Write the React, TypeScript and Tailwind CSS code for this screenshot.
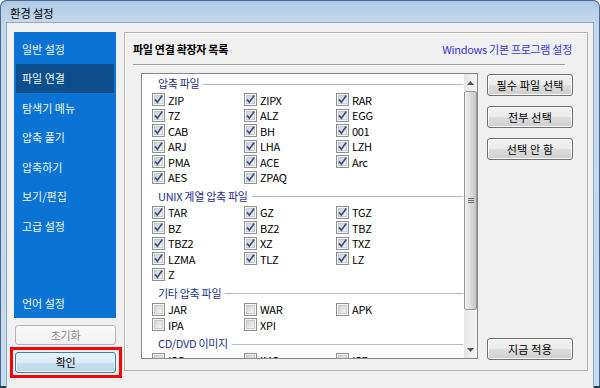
import React from "react";

type Item = [string, boolean];
const groups: { title: string; items: Item[] }[] = [
  {
    title: "압축 파일",
    items: [
      ["ZIP", true], ["ZIPX", true], ["RAR", true],
      ["7Z", true], ["ALZ", true], ["EGG", true],
      ["CAB", true], ["BH", true], ["001", true],
      ["ARJ", true], ["LHA", true], ["LZH", true],
      ["PMA", true], ["ACE", true], ["Arc", true],
      ["AES", true], ["ZPAQ", true],
    ],
  },
  {
    title: "UNIX 계열 압축 파일",
    items: [
      ["TAR", true], ["GZ", true], ["TGZ", true],
      ["BZ", true], ["BZ2", true], ["TBZ", true],
      ["TBZ2", true], ["XZ", true], ["TXZ", true],
      ["LZMA", true], ["TLZ", true], ["LZ", true],
      ["Z", true],
    ],
  },
  {
    title: "기타 압축 파일",
    items: [["JAR", false], ["WAR", false], ["APK", false], ["IPA", false], ["XPI", false]],
  },
  {
    title: "CD/DVD 이미지",
    items: [["ISO", false], ["IMG", false], ["ISZ", false]],
  },
];

const menu = ["일반 설정", "파일 연결", "탐색기 메뉴", "압축 풀기", "압축하기", "보기/편집", "고급 설정"];

function CheckBox({ checked }: { checked: boolean }) {
  return (
    <svg width="13" height="13" viewBox="0 0 13 13" className="shrink-0">
      <defs>
        <linearGradient id="cbfill" x1="0" y1="0" x2="1" y2="1">
          <stop offset="0" stopColor="#cdd1d6" />
          <stop offset="1" stopColor="#f6f6f6" />
        </linearGradient>
      </defs>
      <rect x="0.5" y="0.5" width="12" height="12" fill="#f6f6f6" stroke="#8e8f8f" />
      <rect x="2.5" y="2.5" width="8" height="8" fill="url(#cbfill)" stroke="#c8cacd" />
      {checked && (
        <path d="M3 6.4 L5.4 9.2 L10.2 2.6" fill="none" stroke="#3a4e88" strokeWidth="1.7" />
      )}
    </svg>
  );
}

function WinButton({ children }: { children: React.ReactNode }) {
  return (
    <div className="h-[22px] w-[86px] flex items-center justify-center rounded-[3px] border border-[#707070] bg-[linear-gradient(#f2f2f2,#ebebeb_50%,#dddddd_50%,#cfcfcf)] shadow-[inset_0_0_0_1px_#fbfbfb] text-black tracking-[0.2px]">
      {children}
    </div>
  );
}

function Arrow({ up }: { up: boolean }) {
  return (
    <svg width="7" height="4" viewBox="0 0 7 4">
      {up ? <path d="M0 4 L3.5 0 L7 4 Z" fill="#505050" /> : <path d="M0 0 L3.5 4 L7 0 Z" fill="#505050" />}
    </svg>
  );
}

export default function App() {
  return (
    <div className="w-[600px] h-[388px] overflow-hidden flex flex-col px-[6px] pb-[6px] rounded-t-[7px] font-['Noto_Sans_CJK_KR',sans-serif] text-[11px] tracking-[-0.3px] text-black bg-[linear-gradient(180deg,#adc8e6_0px,#c4d8ee_22px,#c8dbef_100%)] shadow-[inset_0_-2px_0_#1f3f4c,inset_0_0_0_1px_#4a6a8c]">
      {/* title bar */}
      <div className="h-[22px] shrink-0 flex items-center pl-[4px] pt-[6px] text-[11.5px]">환경 설정</div>

      {/* client */}
      <div className="flex-1 flex border border-[#8fa8c6] bg-[#f0f0f0] pt-[9px] pl-[3px] pr-[5px] pb-[10px]">
        {/* left column */}
        <div className="w-[112px] shrink-0 flex flex-col">
          <div className="ml-[4px] w-[102px] h-[286px] bg-[#0b73d3] flex flex-col pt-[2px]">
            {menu.map((m) => (
              <div
                key={m}
                className={
                  "h-[29.5px] mx-[2px] pl-[6px] flex items-center text-[#f2f7fc] tracking-[0px] " +
                  (m === "파일 연결" ? "bg-[#0c4e8e]" : "")
                }
              >
                {m}
              </div>
            ))}
            <div className="flex-1" />
            <div className="h-[29px] mx-[2px] pl-[6px] flex items-center text-[#f2f7fc] tracking-[0px]">언어 설정</div>
          </div>
          <div className="mt-[7px] ml-[5px] w-[101px] h-[20px] rounded-[3px] border border-[#b1b5b8] bg-[linear-gradient(#fafafa,#f1f1f1)] flex items-center justify-center text-[#8a8a8a]">
            초기화
          </div>
          <div className="mt-[2px] w-[112px] h-[31px] border-[3px] border-[#ff0000] pt-[2px] pl-[2px]">
            <div className="w-[101px] h-[21px] rounded-[3px] border border-[#3c7fb1] bg-[linear-gradient(#e8f3fa,#dcecf6_50%,#c6e0ef_50%,#b9d8ea)] shadow-[inset_0_0_0_1px_#e9f7fd] flex items-center justify-center">
              확인
            </div>
          </div>
        </div>

        {/* right panel */}
        <div className="ml-[2px] w-[464px] h-[339px] border border-[#b2b2b2] shadow-[inset_1px_1px_0_#ffffff] flex flex-col">
          <div className="mt-[8px] h-[17px] pl-[8px] pr-[15px] flex items-center justify-between">
            <span className="font-bold">파일 연결 확장자 목록</span>
            <span className="text-[#3535df]">Windows 기본 프로그램 설정</span>
          </div>
          <div className="mt-[6px] ml-[8px] mr-[22px] h-[2px] border-t border-[#a0a0a0] border-b border-b-white" />

          <div className="mt-[7px] pl-[16px] flex gap-[9px]">
            {/* list box */}
            <div className="w-[337px] h-[286px] border border-[#828790] bg-white flex overflow-hidden">
              <div className="flex-1 pt-[1px] overflow-hidden">
                {groups.map((g, gi) => (
                  <div key={g.title} className={gi > 0 ? "mt-[2.5px]" : ""}>
                    <div className="h-[17px] flex items-center pl-[16px] pr-[1px]">
                      <span className="text-[#1e3287]">{g.title}</span>
                      <div className="flex-1 h-px bg-[#aabfdd] ml-[4px] mt-[1px]" />
                    </div>
                    <div className="grid grid-cols-[92px_92px_92px] pl-[10px]">
                      {g.items.map(([name, c]) => (
                        <div key={name} className="h-[15.5px] flex items-center">
                          <CheckBox checked={c} />
                          <span className="ml-[3px]">{name}</span>
                        </div>
                      ))}
                    </div>
                  </div>
                ))}
              </div>
              {/* scrollbar */}
              <div className="w-[13px] shrink-0 flex flex-col bg-[linear-gradient(90deg,#e6e6e6,#f5f5f5)]">
                <div className="h-[17px] flex items-center justify-center">
                  <Arrow up />
                </div>
                <div className="h-[219px] rounded-[2px] border border-[#979797] bg-[linear-gradient(90deg,#f0f0f0,#dadada_55%,#c6c6c6)] flex items-center justify-center">
                  <svg width="6" height="6" viewBox="0 0 6 6">
                    <path d="M0 0.5 H6 M0 2.5 H6 M0 4.5 H6" stroke="#6e6e6e" strokeWidth="1" />
                  </svg>
                </div>
                <div className="flex-1" />
                <div className="h-[17px] flex items-center justify-center">
                  <Arrow up={false} />
                </div>
              </div>
            </div>

            {/* buttons */}
            <div className="w-[86px] h-[286px] flex flex-col pt-[1px] gap-[10px]">
              <WinButton>필수 파일 선택</WinButton>
              <WinButton>전부 선택</WinButton>
              <WinButton>선택 안 함</WinButton>
              <div className="mt-auto mb-[-1px]">
                <WinButton>지금 적용</WinButton>
              </div>
            </div>
          </div>
        </div>
      </div>
    </div>
  );
}
